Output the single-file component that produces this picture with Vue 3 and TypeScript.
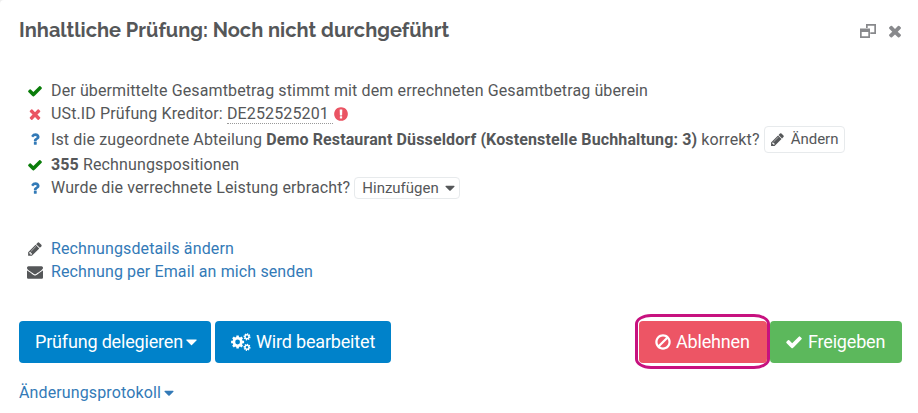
<script setup lang="ts">
const icons = {
  check: 'M1671 566q0 40-28 68l-724 724-136 136q-28 28-68 28t-68-28l-136-136-362-362q-28-28-28-68t28-68l136-136q28-28 68-28t68 28l294 295 656-657q28-28 68-28t68 28l136 136q28 28 28 68z',
  times: 'M1490 1322q0 40-28 68l-136 136q-28 28-68 28t-68-28l-294-294-294 294q-28 28-68 28t-68-28l-136-136q-28-28-28-68t28-68l294-294-294-294q-28-28-28-68t28-68l136-136q28-28 68-28t68 28l294 294 294-294q28-28 68-28t68 28l136 136q28 28 28 68t-28 68l-294 294 294 294q28 28 28 68z',
  question: 'M1088 1256v240q0 16-12 28t-28 12h-240q-16 0-28-12t-12-28v-240q0-16 12-28t28-12h240q16 0 28 12t12 28zm316-600q0 54-15.500 101t-35 76.500-55 59.500-57.500 43.500-61 35.500q-41 23-68.500 65t-27.500 67q0 17-12 32.500t-28 15.500h-240q-15 0-25.500-18.500t-10.500-37.500v-45q0-83 65-156.500t143-108.500q59-27 84-56t25-76q0-42-46.500-74t-107.500-32q-65 0-108 29-35 25-107 115-13 16-31 16-12 0-25-8l-164-125q-13-10-15.500-25t5.500-28q160-266 464-266 80 0 161 31t146 83 106 127.500 41 158.500z',
  pencil: 'M491 1536l91-91-235-235-91 91v107h128v128h107zm523-928q0-22-22-22-10 0-17 7l-542 542q-7 7-7 17 0 22 22 22 10 0 17-7l542-542q7-7 7-17zm-54-192l416 416-832 832h-416v-416zm683 96q0 53-37 90l-166 166-416-416 166-165q36-38 90-38 53 0 91 38l235 234q37 39 37 91z',
  envelope: 'M1792 710v794q0 66-47 113t-113 47h-1472q-66 0-113-47t-47-113v-794q44 49 101 87 362 246 497 345 57 42 92.500 65.500t94.500 48 110 24.500h2q51 0 110-24.500t94.500-48 92.500-65.500q170-123 498-345 57-39 100-87zm0-294q0 79-49 151t-122 123q-376 261-468 325-10 7-42.500 30.500t-54 38-52 32.500-57.500 27-50 9h-2q-23 0-50-9t-57.500-27-52-32.500-54-38-42.500-30.500q-91-64-262-182.500t-205-142.500q-62-42-117-115.500t-55-136.500q0-78 41.500-130t118.500-52h1472q65 0 112.500 47t47.500 113z',
  ban: 'M1440 893q0-161-87-295l-754 753q137 89 297 89 111 0 211.500-43.500t173.500-116.500 116-174.500 43-212.500zm-999 299l755-754q-135-91-300-91-148 0-273 73t-198 199-73 274q0 162 89 299zm1223-299q0 157-61 300t-163.500 246-245 164-298.500 61-298.500-61-245-164-163.500-246-61-300 61-299.500 163.500-245.500 245-164 298.500-61 298.500 61 245 164 163.500 245.500 61 299.500z',
  alert: 'M896 128q209 0 385.500 103t279.500 279.500 103 385.500-103 385.500-279.500 279.500-385.500 103-385.500-103-279.500-279.500-103-385.500 103-385.500 279.500-279.500 385.500-103zm128 1247v-190q0-14-9-23.500t-22-9.500h-192q-13 0-23 10t-10 23v190q0 13 10 23t23 10h192q13 0 22-9.500t9-23.500zm-2-344l18-621q0-12-10-18-10-8-24-8h-220q-14 0-24 8-10 6-10 18l17 621q0 10 10 17.500t24 7.500h185q14 0 23.500-7.500t10.500-17.500z',
  caret: 'M1408 704q0 26-19 45l-448 448q-19 19-45 19t-45-19l-448-448q-19-19-19-45t19-45 45-19h896q26 0 45 19t19 45z',
}

// Gear outline with a round hole; filled with the even-odd rule.
function gear(cx: number, cy: number, outer: number, inner: number, hole: number, turn = 0): string {
  const points: string[] = []
  for (let i = 0; i < 8; i++) {
    const a = turn + (i * Math.PI) / 4
    for (const [offset, r] of [[-0.27, inner], [-0.18, outer], [0.18, outer], [0.27, inner]]) {
      points.push(`${(cx + r * Math.cos(a + offset)).toFixed(2)} ${(cy + r * Math.sin(a + offset)).toFixed(2)}`)
    }
  }
  return `M${points.join('L')}ZM${cx - hole} ${cy}a${hole} ${hole} 0 1 0 ${hole * 2} 0a${hole} ${hole} 0 1 0 ${-hole * 2} 0Z`
}
const gears = gear(6.6, 9, 6.6, 5.1, 2.4) + gear(16, 3.8, 3.6, 2.7, 1.25, 0.2) + gear(16, 14.3, 3.6, 2.7, 1.25, 0.2)
</script>

<template>
  <main class="panel">
    <header class="head">
      <h1>Inhaltliche Prüfung: Noch nicht durchgeführt</h1>
      <div class="tools">
        <svg class="restore" viewBox="0 0 16 14"><path fill-rule="evenodd" d="M6 0h10v10H10.300V8.300h4V1.800H7.700V4H6ZM0 4.500h10V14H0ZM1.700 8v4.300h6.600V8Z" /></svg>
        <svg class="fa" viewBox="0 0 1792 1792"><path :d="icons.times" /></svg>
      </div>
    </header>

    <ul class="list checks">
      <li>
        <svg class="fa ok" viewBox="0 0 1792 1792"><path :d="icons.check" /></svg>
        <span>Der übermittelte Gesamtbetrag stimmt mit dem errechneten Gesamtbetrag überein</span>
      </li>
      <li>
        <svg class="fa bad" viewBox="0 0 1792 1792"><path :d="icons.times" /></svg>
        <span>USt.ID Prüfung Kreditor: <span class="vat">DE252525201&nbsp;</span></span>
        <svg class="fa bad" viewBox="0 0 1792 1792"><path :d="icons.alert" /></svg>
      </li>
      <li class="tall">
        <svg class="fa ask" viewBox="0 0 1792 1792"><path :d="icons.question" /></svg>
        <span>Ist die zugeordnete Abteilung <b>Demo Restaurant Düsseldorf (Kostenstelle Buchhaltung: 3)</b> korrekt?</span>
        <button class="small edit"><svg class="fa" viewBox="0 0 1792 1792"><path :d="icons.pencil" /></svg>Ändern</button>
      </li>
      <li>
        <svg class="fa ok" viewBox="0 0 1792 1792"><path :d="icons.check" /></svg>
        <span><b>355</b> Rechnungspositionen</span>
      </li>
      <li>
        <svg class="fa ask" viewBox="0 0 1792 1792"><path :d="icons.question" /></svg>
        <span>Wurde die verrechnete Leistung erbracht?</span>
        <button class="small add">Hinzufügen<svg class="fa" viewBox="0 0 1792 1792"><path :d="icons.caret" /></svg></button>
      </li>
    </ul>

    <ul class="list links">
      <li>
        <svg class="fa" viewBox="0 0 1792 1792"><path :d="icons.pencil" /></svg>
        <a>Rechnungsdetails ändern</a>
      </li>
      <li>
        <svg class="fa" viewBox="0 0 1792 1792"><path :d="icons.envelope" /></svg>
        <a>Rechnung per Email an mich senden</a>
      </li>
    </ul>

    <div class="actions">
      <button class="btn delegate">Prüfung delegieren<svg class="fa" viewBox="384 0 1024 1792"><path :d="icons.caret" /></svg></button>
      <button class="btn progress"><svg class="gears" viewBox="0 0 20 18"><path fill-rule="evenodd" :d="gears" /></svg>Wird bearbeitet</button>
      <div class="marked">
        <button class="btn reject"><svg class="fa" viewBox="0 0 1792 1792"><path :d="icons.ban" /></svg>Ablehnen</button>
      </div>
      <button class="btn approve"><svg class="fa" viewBox="0 0 1792 1792"><path :d="icons.check" /></svg>Freigeben</button>
    </div>

    <a class="log">Änderungsprotokoll<svg class="fa" viewBox="384 0 1024 1792"><path :d="icons.caret" /></svg></a>
  </main>
</template>

<style>
body {
  background: #eee;
}
</style>

<style scoped>
.panel {
  box-sizing: border-box;
  height: 413px;
  padding: 15px 16px 0 19px;
  overflow: hidden;
  background: #fff;
  border-top-left-radius: 4px;
  color: #555759;
  font: 16px/23px Roboto, sans-serif;
  letter-spacing: 0.125px;
}
svg {
  display: block;
  flex: none;
  fill: currentColor;
}
.fa {
  width: 16px;
  height: 16px;
}
.head {
  display: flex;
  justify-content: space-between;
  height: 64px;
}
h1 {
  margin: 0;
  font: 700 20px/31px Raleway, Lato, sans-serif;
  letter-spacing: 0;
  white-space: nowrap;
}
.tools {
  display: flex;
  align-items: center;
  gap: 10px;
  height: 31px;
  color: #88898c;
}
.restore {
  width: 16px;
  height: 14px;
  margin-top: 1px;
}
.tools .fa {
  width: 18px;
  height: 18px;
  margin-right: -2px;
}
.list {
  margin: 0;
  padding: 0 0 0 8px;
  list-style: none;
}
.list li {
  display: flex;
  align-items: center;
  height: 23px;
  white-space: nowrap;
}
.list li > .fa:first-child {
  margin-right: 8px;
}
.checks .tall {
  height: 28px;
}
.ok {
  color: #0a7d0a;
}
.bad {
  color: #ea5463;
}
.ask {
  color: #337ab7;
}
.vat {
  display: inline-block;
  height: 21px;
  border-bottom: 1px dotted #999;
  line-height: 23px;
}
b {
  font-weight: 700;
}
.small {
  display: inline-flex;
  align-items: center;
  box-sizing: border-box;
  margin: 0 0 0 4px;
  padding: 0;
  border: 1px solid #e7eaec;
  border-radius: 4px;
  background: #fff;
  color: inherit;
  font: 15px/20px Roboto, sans-serif;
  letter-spacing: 0;
}
.edit {
  width: 81px;
  height: 27px;
  gap: 6px;
  padding-left: 5px;
}
.edit .fa {
  width: 15px;
  height: 15px;
}
.add {
  width: 106px;
  height: 22px;
  gap: 3px;
  padding-left: 7px;
}
a {
  color: #337ab7;
}
.links {
  margin-top: 38px;
}
.actions {
  display: flex;
  align-items: flex-start;
  margin-top: 38px;
}
.btn {
  display: flex;
  align-items: center;
  box-sizing: border-box;
  height: 42px;
  margin: 0;
  padding: 0 0 0 16px;
  border: 0;
  border-radius: 4px;
  color: #fff;
  font: 18px/24px Roboto, sans-serif;
  letter-spacing: -0.18px;
  white-space: nowrap;
}
.btn .fa {
  width: 18px;
  height: 18px;
}
.delegate {
  width: 192px;
  gap: 3px;
  background: #0082ca;
}
.btn.delegate .fa {
  width: 11px;
}
.progress {
  width: 176px;
  gap: 5px;
  margin-left: 4px;
  background: #0082ca;
}
.gears {
  width: 20px;
  height: 18px;
}
.marked {
  box-sizing: border-box;
  width: 135px;
  height: 55px;
  margin: -7px 0 -6px auto;
  padding: 4px 0 4px 1px;
  border: 3px solid #c7117f;
  border-radius: 16px / 10px;
}
.reject {
  width: 128px;
  gap: 4px;
  padding-left: 15px;
  background: #ed5565;
}
.approve {
  width: 132px;
  gap: 5px;
  padding-left: 15px;
  background: #5cb85c;
}
.log {
  display: flex;
  align-items: center;
  gap: 3px;
  margin-top: 18px;
}
.log .fa {
  width: 10px;
}
</style>
